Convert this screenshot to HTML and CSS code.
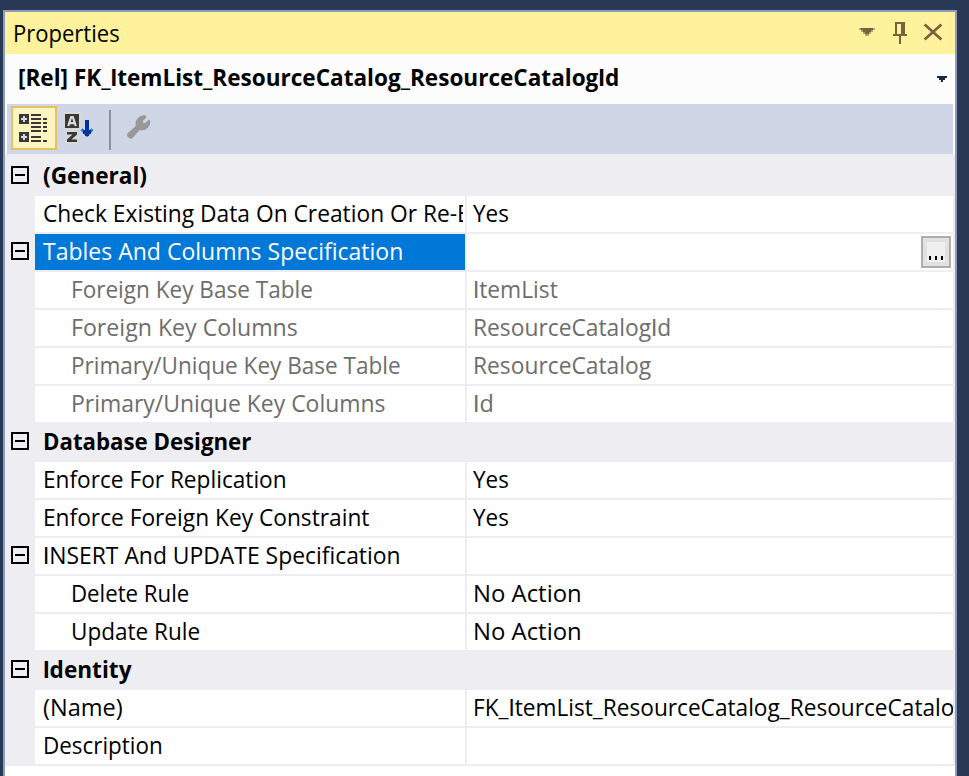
FILE: index.html
```html
<!DOCTYPE html>
<html lang="en">
<head>
<meta charset="utf-8">
<title>Properties</title>
<link rel="stylesheet" href="styles.css">
</head>
<body>
<section class="panel">
  <header class="titlebar">
    <h1 class="title"><span class="t" data-w="105">Properties</span></h1>
    <svg class="window-icons" width="84" height="24" viewBox="0 0 42 12" shape-rendering="crispEdges" fill="#75633d">
      <path d="M1 3h6v1H1zM2 4h4v1H2zM3 5h2v1H3z"/>
      <path opacity=".55" d="M0 3h1v1H0zM7 3h1v1H7zM1 4h1v1H1zM6 4h1v1H6zM2 5h1v1H2zM5 5h1v1H5zM3 6h2v1H3z"/>
      <path d="M18 0h5v6h1v1h-3v4h-1V7h-3V6h1zM19 1v5h2V1z" fill-rule="evenodd"/>
      <path shape-rendering="auto" d="M32.800 1.200l8.400 7.600M41.200 1.200L32.800 8.800" stroke="#75633d" stroke-width="1.350" fill="none"/>
    </svg>
  </header>
  <div class="object-picker">
    <span class="t" data-w="600">[Rel] FK_ItemList_ResourceCatalog_ResourceCatalogId</span>
    <svg class="picker-arrow" width="10" height="6" viewBox="0 0 5 3" shape-rendering="crispEdges"><path fill="#1b293e" d="M0 0h5v1H4v1H3v1H2V2H1V1H0z"/></svg>
  </div>
  <div class="toolbar">
    <button class="tool active" aria-label="Categorized">
      <svg width="28" height="28" viewBox="0 0 14 14" shape-rendering="crispEdges">
        <path fill="#383838" d="M0 0h5v5H0zM0 9h5v5H0zM6 0h5v1H6zM6 2h5v1H6zM6 4h5v1H6zM6 6h5v1H6zM6 8h5v1H6zM6 11h5v1H6zM6 13h5v1H6zM12 2h2v1h-2zM12 4h2v1h-2zM12 6h2v1h-2zM12 8h2v1h-2zM12 13h2v1h-2z"/>
        <path fill="#d8d8dc" d="M2 1h1v1h1v1H3v1H2V3H1V2h1zM2 10h1v1h1v1H3v1H2v-1H1v-1h1z"/>
      </svg>
    </button>
    <svg class="sort" width="32" height="32" viewBox="0 0 16 16" shape-rendering="crispEdges">
      <path fill="#d8d8d8" d="M0 0h9v9H8v7H1V9H0z"/>
      <path fill="#383838" d="M1 1h7v7H1z"/>
      <path shape-rendering="auto" fill="#383838" d="M2 10h5v1.300L4.200 13.700H7V15H2v-1.300l2.800-2.400H2z"/>
      <path fill="none" stroke="#dcdcdc" stroke-width="1.100" shape-rendering="auto" d="M2.600 7l1.500-4.500h.8L6.400 7M3 5.600h3"/>
      <path shape-rendering="auto" fill="none" stroke="#1c7fd0" stroke-width="1.500" d="M9.300 8.600l2.700 2.900 2.700-2.900"/>
      <path fill="#00339c" d="M11 4h2v8h-2zM10 9h4v2h-4z"/>
    </svg>
    <i class="divider"></i>
    <svg class="wrench" width="26" height="26" viewBox="0 0 13 13"><path fill="#98989b" stroke="#98989b" stroke-width=".5" d="M.8 9.900L5.100 6.100C4.500 2.900 6.700.6 9.700.9L10 1.700 8.300 3.300v1.400h1.500L11.300 3l.6.400C12.100 6.500 9.600 8.500 6.800 7.800L3 12C1.800 12.500.4 11.200.8 9.900z"/></svg>
  </div>
  <main class="grid">
    <div class="row category"><i class="expander"></i><span class="t" data-w="103">(General)</span></div>
    <div class="row"><i class="gutter"></i><div class="key"><span class="t" data-w="504">Check Existing Data On Creation Or Re-Enabling</span></div><div class="value"><span class="t" data-w="34">Yes</span></div></div>
    <div class="row"><i class="expander"></i><div class="key selected"><span class="t" data-w="359">Tables And Columns Specification</span></div><div class="value"><button class="more" aria-label="Edit"><i></i><i></i><i></i></button></div></div>
    <div class="row muted"><i class="gutter"></i><div class="key child"><span class="t" data-w="240">Foreign Key Base Table</span></div><div class="value"><span class="t" data-w="83">ItemList</span></div></div>
    <div class="row muted"><i class="gutter"></i><div class="key child"><span class="t" data-w="225">Foreign Key Columns</span></div><div class="value"><span class="t" data-w="197">ResourceCatalogId</span></div></div>
    <div class="row muted"><i class="gutter"></i><div class="key child"><span class="t" data-w="328">Primary/Unique Key Base Table</span></div><div class="value"><span class="t" data-w="177">ResourceCatalog</span></div></div>
    <div class="row muted"><i class="gutter"></i><div class="key child"><span class="t" data-w="313">Primary/Unique Key Columns</span></div><div class="value"><span class="t" data-w="19">Id</span></div></div>
    <div class="row category"><i class="expander"></i><span class="t" data-w="207">Database Designer</span></div>
    <div class="row"><i class="gutter"></i><div class="key"><span class="t" data-w="242">Enforce For Replication</span></div><div class="value"><span class="t" data-w="34">Yes</span></div></div>
    <div class="row"><i class="gutter"></i><div class="key"><span class="t" data-w="325">Enforce Foreign Key Constraint</span></div><div class="value"><span class="t" data-w="34">Yes</span></div></div>
    <div class="row"><i class="expander"></i><div class="key"><span class="t" data-w="356">INSERT And UPDATE Specification</span></div><div class="value"></div></div>
    <div class="row"><i class="gutter"></i><div class="key child"><span class="t" data-w="117">Delete Rule</span></div><div class="value"><span class="t" data-w="107">No Action</span></div></div>
    <div class="row"><i class="gutter"></i><div class="key child"><span class="t" data-w="128">Update Rule</span></div><div class="value"><span class="t" data-w="107">No Action</span></div></div>
    <div class="row category"><i class="expander"></i><span class="t" data-w="87">Identity</span></div>
    <div class="row"><i class="gutter"></i><div class="key"><span class="t" data-w="78">(Name)</span></div><div class="value"><span class="t" data-w="512">FK_ItemList_ResourceCatalog_ResourceCatalogId</span></div></div>
    <div class="row"><i class="gutter"></i><div class="key"><span class="t" data-w="118">Description</span></div><div class="value"></div></div>
  </main>
  <div class="blank"></div>
</section>
<script src="labels.js"></script>
</body>
</html>
```
FILE: styles.css
```css
* { box-sizing: border-box; }
body {
  margin: 0;
  height: 776px;
  overflow: hidden;
  padding: 10px 12px 0 3px;
  background: #293955;
  font-family: "Open Sans", "Noto Sans", sans-serif;
  font-size: 24px;
  line-height: 34px;
  color: #000;
}
.panel {
  height: 766px;
  border: 2px solid #8e9bbc;
  border-bottom: 0;
  background: #fff;
  display: flex;
  flex-direction: column;
}
.t {
  display: inline-block;
  white-space: pre;
  transform-origin: 0 50%;
}
.plain { font-family: Roboto, sans-serif; line-height: 1; }
.titlebar {
  height: 42px;
  flex: none;
  background: #fff29d;
  display: flex;
  align-items: flex-start;
  justify-content: space-between;
  padding: 0 12px 0 8px;
}
.title { margin: 4px 0 0; font: inherit; }
.window-icons { margin-top: 10px; }
.object-picker {
  height: 50px;
  flex: none;
  margin-right: 2px;
  padding: 6px 6px 0 13px;
  background: #fcfcfc;
  display: flex;
  justify-content: space-between;
  font-weight: 700;
}
.picker-arrow { margin-top: 16px; }
.toolbar {
  height: 50px;
  flex: none;
  margin: 0 2px;
  padding: 2px 4px;
  background: #cfd6e5;
  display: flex;
  align-items: flex-start;
}
.tool {
  width: 46px;
  height: 44px;
  padding: 6px;
  border: 2px solid #e5c365;
  background: #fff3c0;
  line-height: 0;
  text-align: left;
}
.sort { margin: 6px 0 0 6px; }
.divider { width: 2px; height: 40px; margin: 4px 0 0 14px; background: #8591a2; }
.wrench { margin: 8px 0 0 15px; }
.grid { background: #eeeef2; padding-top: 4px; flex: none; }
.row { height: 38px; display: flex; }
.gutter { width: 30px; flex: none; }
.expander {
  width: 18px;
  height: 18px;
  flex: none;
  margin: 8px 6px 0;
  border: 2px solid #000;
  background: linear-gradient(#000, #000) center / 10px 2px no-repeat;
}
.category { font-weight: 700; }
.category .t { margin-left: 8px; }
.key {
  width: 430px;
  height: 36px;
  flex: none;
  padding-left: 8px;
  border-right: 2px solid #fff;
  background: #fff;
  overflow: hidden;
}
.child { padding-left: 36px; }
.value {
  height: 36px;
  flex: 1;
  min-width: 0;
  margin: 0 2px;
  padding-left: 6px;
  background: #fff;
  overflow: hidden;
}
.muted { color: #6d6d6d; }
.selected { background: #0078d7; border-color: #0078d7; color: #fff; }
.more {
  width: 30px;
  height: 32px;
  margin: 2px 2px 0 auto;
  padding: 0 0 6px;
  border: 2px solid #adadad;
  background: linear-gradient(#f0f0f0, #f0f0f0) center / 18px 20px no-repeat #e1e1e1;
  display: flex;
  align-items: flex-end;
  justify-content: center;
  gap: 4px;
}
.more i { width: 2px; height: 4px; background: #000; }
.blank { flex: 1; margin: 0 0 0 2px; background: #fff; }
```
FILE: labels.js
```js
// Use the unserifed capital I, then condense each label to its own width,
// allowing for glyph side bearings.
document.querySelectorAll('.t').forEach(function (el) {
  el.innerHTML = el.textContent.replace(/I/g, '<span class="plain">I</span>');
  var width = Number(el.dataset.w) + 1.5;
  el.style.transform = 'scaleX(' + width / el.offsetWidth + ')';
});
```
